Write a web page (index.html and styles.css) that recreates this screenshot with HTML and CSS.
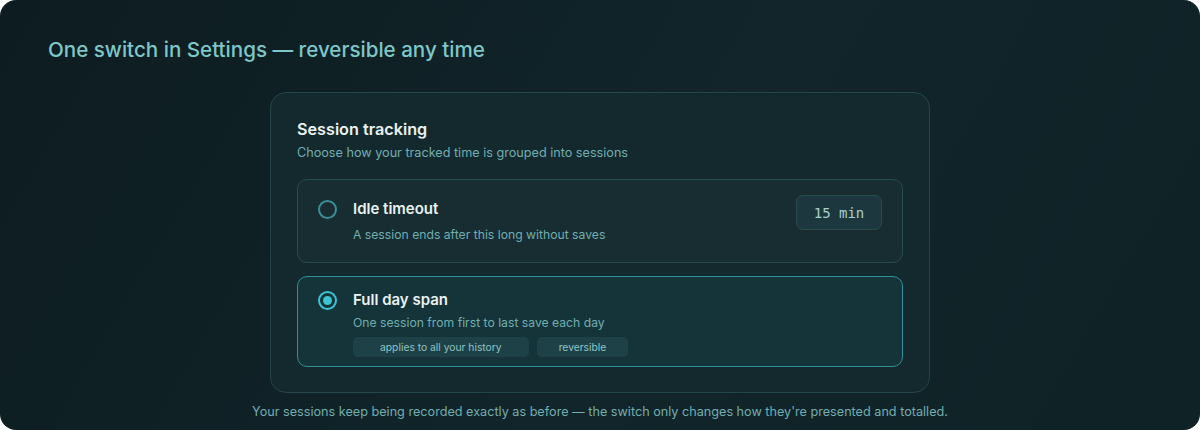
FILE: index.html
```html
<!DOCTYPE html>
<html lang="en">
<head>
  <meta charset="UTF-8" />
  <title>Session tracking</title>
  <link rel="stylesheet" href="styles.css">
</head>
<body>
  <div class="panel">
    <h1 class="headline">One switch in Settings — reversible any time</h1>

    <div class="card">
      <h2>Session tracking</h2>
      <p class="card-sub">Choose how your tracked time is grouped into sessions</p>

      <div class="options">
        <div class="option idle">
          <span class="radio"></span>
          <div class="option-body">
            <div class="option-title">Idle timeout</div>
            <div class="option-desc">A session ends after this long without saves</div>
          </div>
          <div class="value-box">15 min</div>
        </div>

        <div class="option selected">
          <span class="radio checked"></span>
          <div class="option-body">
            <div class="option-title">Full day span</div>
            <div class="option-desc">One session from first to last save each day</div>
            <div class="chips">
              <span class="chip wide">applies to all your history</span>
              <span class="chip">reversible</span>
            </div>
          </div>
        </div>
      </div>
    </div>

    <p class="footnote">Your sessions keep being recorded exactly as before — the switch only changes how they're presented and totalled.</p>
  </div>
</body>
</html>
```

FILE: styles.css
```css
:root {
  --bg: #0e1f23;
  --card: #14292e;
  --card-border: #24434a;
  --option: #172d32;
  --option-border: #294a50;
  --selected: #15343a;
  --selected-border: #2e8e99;
  --accent: #3cc3d2;
  --text: #e9f1f1;
  --muted: #72aeb0;
  --title: #7ec7c8;
}

* {
  box-sizing: border-box;
}

body {
  margin: 0;
  background: #fff;
  font-family: 'Inter', sans-serif;
}

.panel {
  width: 1200px;
  height: 430px;
  border-radius: 16px;
  background: linear-gradient(120deg, #0d1c20 0%, #11252a 55%, #0f2226 100%);
  padding: 38px 48px 0;
  display: flex;
  flex-direction: column;
  align-items: center;
}

.headline {
  align-self: flex-start;
  margin: 0;
  font-size: 20.6px;
  line-height: 24px;
  font-weight: 500;
  color: var(--title);
}

.card {
  width: 660px;
  margin-top: 30px;
  background: var(--card);
  border: 1px solid var(--card-border);
  border-radius: 16px;
  padding: 25px 26px 25px;
}

.card h2 {
  margin: 0;
  font-size: 16.2px;
  line-height: 22px;
  font-weight: 600;
  color: var(--text);
}

.card-sub {
  margin: 4px 0 0;
  font-size: 12.65px;
  line-height: 18px;
  color: var(--muted);
}

.options {
  display: flex;
  flex-direction: column;
  gap: 13px;
  margin-top: 17px;
}

.option {
  display: flex;
  align-items: flex-start;
  gap: 16px;
  background: var(--option);
  border: 1px solid var(--option-border);
  border-radius: 10px;
  padding: 19px 20px 18px;
}

.option.selected {
  background: var(--selected);
  border: 1.5px solid var(--selected-border);
  padding: 13px 20px 9px;
}

.radio {
  flex: none;
  width: 19px;
  height: 19px;
  margin-top: 1px;
  border-radius: 50%;
  border: 2px solid #3b8e96;
  display: flex;
  align-items: center;
  justify-content: center;
}

.radio.checked {
  border-color: var(--accent);
}

.radio.checked::after {
  content: "";
  width: 9px;
  height: 9px;
  border-radius: 50%;
  background: var(--accent);
}

.option-body {
  flex: 1;
}

.option-title {
  font-size: 15px;
  line-height: 20px;
  font-weight: 600;
  color: var(--text);
}

.option-desc {
  margin-top: 7px;
  font-size: 12.2px;
  line-height: 18px;
  color: var(--muted);
}

.option.selected .option-desc {
  margin-top: 4px;
}

.value-box {
  flex: none;
  margin-top: -4px;
  width: 86px;
  height: 35px;
  display: flex;
  align-items: center;
  justify-content: center;
  background: #1c383e;
  border: 1px solid #2a4a50;
  border-radius: 7px;
  font-family: 'DejaVu Sans Mono', monospace;
  font-size: 14px;
  color: #a9cfd0;
}

.chips {
  display: flex;
  gap: 8px;
  margin-top: 5px;
}

.chip {
  height: 20px;
  display: flex;
  align-items: center;
  padding: 0 22px;
  background: #1e4147;
  border-radius: 5px;
  font-size: 10.3px;
  color: #8fc3c4;
}

.chip.wide {
  padding: 0 27px;
}

.footnote {
  margin: 10px 0 0;
  font-size: 12.65px;
  line-height: 18px;
  color: var(--muted);
}
```
